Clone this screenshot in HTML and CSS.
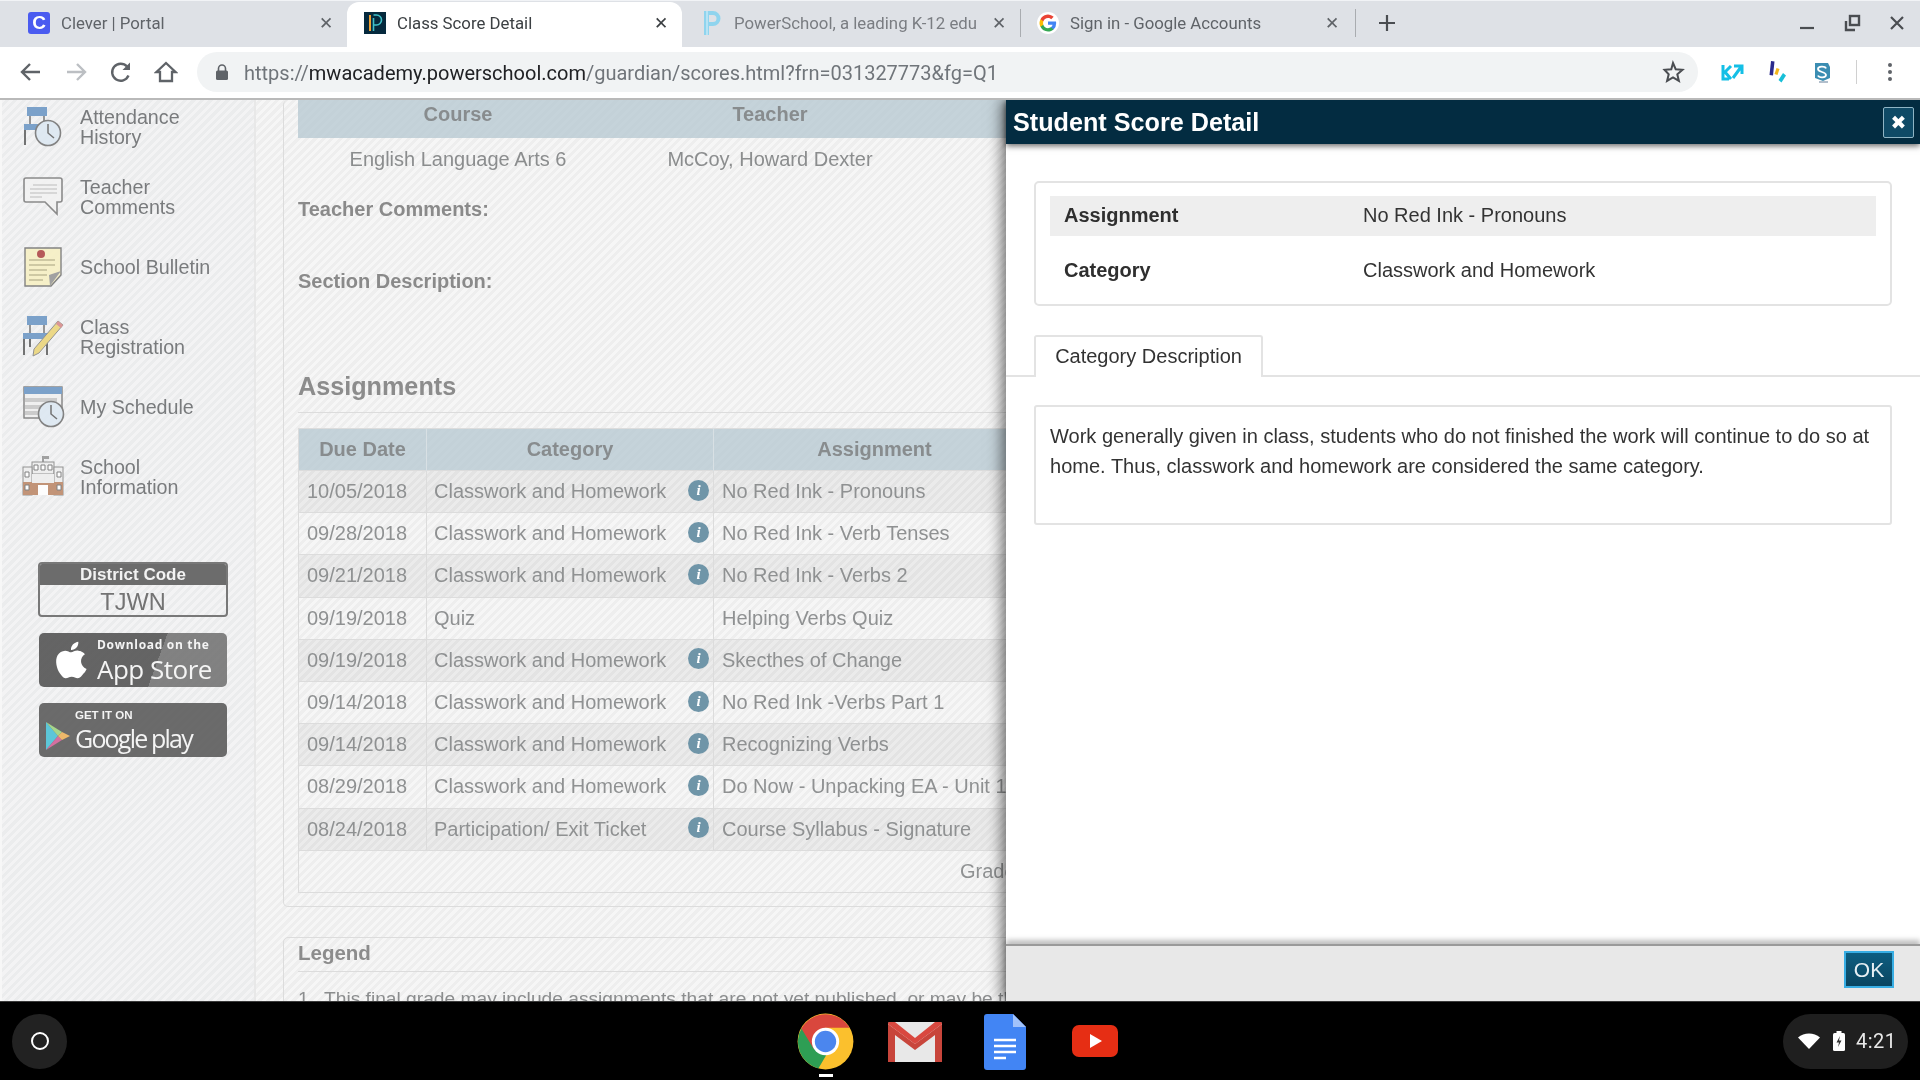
FILE: index.html
```html
<!DOCTYPE html>
<html lang="en">
<head>
<meta charset="utf-8">
<title>Class Score Detail</title>
<link rel="stylesheet" href="styles.css">
</head>
<body>
<div class="screen">
  <header class="tabstrip">
    <div class="tab tab-first">
      <span class="fav fav-clever">C</span><span class="tab-title">Clever | Portal</span><span class="tab-x">✕</span>
    </div>
    <div class="tab tab-active">
      <svg class="fav" viewBox="0 0 22 22"><rect width="22" height="22" fill="#05293d"/><path d="M6 3v16" stroke="#f0a030" stroke-width="2"/><path d="M9.500 3h3a5 5 0 0 1 0 10h-3" fill="none" stroke="#3fc0c8" stroke-width="1.600"/><path d="M9.500 6v13" stroke="#3fc0c8" stroke-width="1.600"/></svg>
      <span class="tab-title tab-title-dark">Class Score Detail</span><span class="tab-x tab-x-dark">✕</span>
    </div>
    <div class="tab tab-third">
      <svg class="fav fav-tall" viewBox="0 0 20 26"><path d="M3 1h9a7.500 7.500 0 0 1 0 15H8v9H3zM8 5v7h4a3.500 3.500 0 0 0 0-7z" fill="#8fd4ee"/><path d="M6 1v24" stroke="#c4e9f6" stroke-width="1.500"/></svg>
      <span class="tab-title tab-title-fade">PowerSchool, a leading K-12 edu</span><span class="tab-x">✕</span>
    </div>
    <i class="tab-sep"></i>
    <div class="tab tab-fourth">
      <svg class="fav" viewBox="0 0 24 24"><circle cx="12" cy="12" r="12" fill="#fff"/><path d="M20.900 12.200c0-.7-.1-1.300-.2-1.900H12v3.600h5a4.300 4.300 0 0 1-1.900 2.800v2.300h3a9 9 0 0 0 2.800-6.800z" fill="#4285f4"/><path d="M12 21.200c2.500 0 4.600-.8 6.100-2.200l-3-2.300c-.8.600-1.900.9-3.100.9-2.400 0-4.400-1.600-5.100-3.800H3.800v2.400A9.200 9.200 0 0 0 12 21.200z" fill="#34a853"/><path d="M6.900 13.800a5.500 5.500 0 0 1 0-3.600V7.800H3.800a9.200 9.200 0 0 0 0 8.400z" fill="#fbbc05"/><path d="M12 6.500c1.400 0 2.600.5 3.500 1.400l2.700-2.700A9.200 9.200 0 0 0 3.800 7.800l3.100 2.400C7.600 8.100 9.600 6.500 12 6.500z" fill="#ea4335"/></svg>
      <span class="tab-title">Sign in - Google Accounts</span><span class="tab-x">✕</span>
    </div>
    <i class="tab-sep"></i>
    <svg class="new-tab" viewBox="0 0 18 18"><path d="M9 1v16M1 9h16" stroke="#4a4d51" stroke-width="2.200"/></svg>
    <div class="win-controls">
      <svg viewBox="0 0 18 18"><path d="M2 14h14" stroke="#4a4d51" stroke-width="2.200"/></svg>
      <svg viewBox="0 0 18 18"><rect x="7" y="2" width="9" height="9" fill="none" stroke="#4a4d51" stroke-width="2.400"/><path d="M3 7v9h9" fill="none" stroke="#4a4d51" stroke-width="2.400"/></svg>
      <svg viewBox="0 0 18 18"><path d="M3 3l12 12M15 3L3 15" stroke="#4a4d51" stroke-width="2.200"/></svg>
    </div>
  </header>

  <div class="toolbar">
    <svg class="tool" viewBox="0 0 24 24"><path d="M21 12H4M11 4l-8 8 8 8" fill="none" stroke="#5f6368" stroke-width="2.400"/></svg>
    <svg class="tool" viewBox="0 0 24 24"><path d="M3 12h17M13 4l8 8-8 8" fill="none" stroke="#bcbfc3" stroke-width="2.400"/></svg>
    <svg class="tool" viewBox="0 0 24 24"><path d="M19.500 15.500A8.500 8.500 0 1 1 18 6.500" fill="none" stroke="#5f6368" stroke-width="2.400"/><path d="M21 2.500V10h-7.500z" fill="#5f6368"/></svg>
    <svg class="tool" viewBox="0 0 24 24"><path d="M12 3l9.500 9H18v9H6v-9H2.500z" fill="none" stroke="#5f6368" stroke-width="2.300"/></svg>
    <div class="omnibox">
      <svg class="lock" viewBox="0 0 14 18"><path d="M3.500 8V5.500a3.500 3.500 0 0 1 7 0V8" fill="none" stroke="#5f6368" stroke-width="1.600"/><rect x="1" y="7.500" width="12" height="9.500" rx="1.500" fill="#5f6368"/></svg>
      <span class="url"><span class="url-dim">https://</span>mwacademy.powerschool.com<span class="url-dim">/guardian/scores.html?frn=031327773&amp;fg=Q1</span></span>
      <svg class="star" viewBox="0 0 24 24"><path d="M12 3l2.700 6.200 6.800.6-5.200 4.500 1.600 6.600-5.900-3.500-5.900 3.500 1.600-6.600L3.500 9.800l6.800-.6z" fill="none" stroke="#4a4d51" stroke-width="2"/></svg>
    </div>
    <div class="ext-row">
      <svg viewBox="0 0 24 24"><path d="M3 5v14h6M11 6L4 13M11 19L5 12" fill="none" stroke="#14bfe6" stroke-width="3"/><path d="M13 18L21 7M14 6h8v8" fill="none" stroke="#14bfe6" stroke-width="3"/></svg>
      <svg viewBox="0 0 24 24"><path d="M6 1l3.500.5-1.500 14-3.500-.5z" fill="#2a2a8c"/><path d="M11.500 8l3 1-2 6-3-1z" fill="#f2b61c"/><path d="M18 13l3 2.500-4.500 7L13.500 20z" fill="#17bfd8"/></svg>
      <svg viewBox="0 0 24 24"><path d="M5 3h13l2 4v11l-7 3-8-3z" fill="#3b8db2"/><path d="M16 8.500C15 6 8 6 8 9c0 3.500 8 2.500 8 6 0 3-7 3-8 .5" fill="none" stroke="#fff" stroke-width="1.800"/><path d="M9 22h9" stroke="#9ab" stroke-width="1.500"/></svg>
      <i class="ext-sep"></i>
      <svg class="menu" viewBox="0 0 24 24"><circle cx="12" cy="5" r="2" fill="#5f6368"/><circle cx="12" cy="12" r="2" fill="#5f6368"/><circle cx="12" cy="19" r="2" fill="#5f6368"/></svg>
    </div>
  </div>

  <div class="viewport">
    <aside class="sidebar">
      <nav class="nav">
        <a class="nav-item">
          <svg class="nav-icon" viewBox="0 0 44 44"><rect x="6" y="2" width="20" height="9" fill="#6f99c6"/><path d="M9 11v8M23 11v8" stroke="#6a6a6a" stroke-width="1.500"/><rect x="3" y="19" width="14" height="6" fill="#6f99c6"/><path d="M4 25v15" stroke="#666" stroke-width="2"/><circle cx="27" cy="28" r="12.500" fill="#dde8f2" stroke="#777" stroke-width="1.600"/><path d="M27 19v9l6 5" fill="none" stroke="#666" stroke-width="1.500"/></svg>
          <span>Attendance<br>History</span>
        </a>
        <a class="nav-item">
          <svg class="nav-icon" viewBox="0 0 44 44"><path d="M5 3h34a2 2 0 0 1 2 2v20a2 2 0 0 1-2 2h-3v12L24 27H5a2 2 0 0 1-2-2V5a2 2 0 0 1 2-2z" fill="#f2f2f2" stroke="#808080" stroke-width="1.600"/><path d="M12 10h24M9 14h27M9 18h27M9 22h12" stroke="#b5b5b5" stroke-width="1.200"/></svg>
          <span>Teacher<br>Comments</span>
        </a>
        <a class="nav-item">
          <svg class="nav-icon" viewBox="0 0 44 44"><path d="M4 3h36v27L30 41H4z" fill="#f7f0c4" stroke="#777" stroke-width="1.400"/><path d="M40 26L28 30l1 11z" fill="#999"/><circle cx="20" cy="9" r="4" fill="#b04a4a"/><path d="M8 15h26M8 20h26M8 25h18M8 30h18M8 35h14" stroke="#bdb68e" stroke-width="1.300"/></svg>
          <span>School Bulletin</span>
        </a>
        <a class="nav-item">
          <svg class="nav-icon" viewBox="0 0 44 44"><rect x="6" y="1" width="20" height="9" fill="#6f99c6"/><path d="M9 10v8M23 10v8" stroke="#6a6a6a" stroke-width="1.500"/><rect x="2" y="18" width="28" height="6" fill="#6f99c6"/><path d="M3 24v16M26 24v16M9 24v8" stroke="#666" stroke-width="2"/><path d="M37 6l5 4-24 28-6 3 1-7z" fill="#ecd67c" stroke="#888" stroke-width="1"/><path d="M37 6l5 4-2 3-5-4z" fill="#d98d8d"/></svg>
          <span>Class<br>Registration</span>
        </a>
        <a class="nav-item">
          <svg class="nav-icon" viewBox="0 0 44 44"><rect x="3" y="2" width="38" height="31" fill="#f0f0f0" stroke="#777" stroke-width="1.400"/><rect x="3" y="2" width="38" height="7" fill="#6f99c6"/><path d="M4 15h32M4 22h28M4 28h24" stroke="#c8c8c8" stroke-width="4"/><circle cx="30" cy="29" r="12.500" fill="#dde8f2" stroke="#777" stroke-width="1.600"/><path d="M30 20v9l6 5" fill="none" stroke="#666" stroke-width="1.500"/></svg>
          <span>My Schedule</span>
        </a>
        <a class="nav-item">
          <svg class="nav-icon" viewBox="0 0 44 44"><path d="M22 1v6" stroke="#777" stroke-width="1.500"/><rect x="22" y="1" width="6" height="3" fill="#999"/><rect x="11" y="7" width="22" height="12" fill="#eee" stroke="#888"/><rect x="2" y="12" width="9" height="28" fill="#eee" stroke="#888"/><rect x="33" y="12" width="9" height="28" fill="#eee" stroke="#888"/><rect x="2" y="27" width="40" height="13" fill="#bd8a6b"/><rect x="11" y="19" width="22" height="9" fill="#eee"/><path d="M13 10h4v5h-4zM20 10h4v5h-4zM27 10h4v5h-4zM4 17h4v5H4zM36 17h4v5h-4zM4 30h4v5H4zM36 30h4v5h-4z" fill="#fff" stroke="#777"/><rect x="17" y="30" width="10" height="10" fill="#fff"/></svg>
          <span>School<br>Information</span>
        </a>
      </nav>
      <div class="district">
        <div class="district-head">District Code</div>
        <div class="district-code">TJWN</div>
      </div>
      <div class="badge badge-apple">
        <svg class="apple" viewBox="0 0 24 24"><path d="M18.700 19.500c-.8 1.200-1.700 2.400-3 2.400-1.300 0-1.800-.8-3.300-.8-1.500 0-2 .8-3.300.8-1.300.1-2.300-1.300-3.100-2.500C4.300 17 3 12.400 4.700 9.400c.9-1.500 2.400-2.400 4.100-2.500 1.300 0 2.500.9 3.300.9.800 0 2.300-1.100 3.800-.9.700 0 2.500.3 3.700 2-3.200 1.900-2.700 6.600.9 8-.4.900-.9 1.800-1.800 2.600zM15 5.200c.7-.8 1.100-2 1-3.200-1 .1-2.200.7-3 1.500-.6.800-1.200 1.900-1 3.100 1.100.1 2.300-.6 3-1.400z" fill="#fff"/></svg>
        <div class="badge-text">
          <span class="badge-small">Download on the</span>
          <span class="badge-large">App Store</span>
        </div>
      </div>
      <div class="badge badge-play">
        <svg class="play" viewBox="0 0 26 30"><path d="M1 1l12 14L1 29z" fill="#5cc6d8"/><path d="M1 1l16 10-4 4z" fill="#a6d68a"/><path d="M1 29l16-10-4-4z" fill="#d46fa0"/><path d="M17 11l8 4-8 4-4-4z" fill="#eeb86a"/></svg>
        <div class="badge-text badge-text-play">
          <span class="badge-get">GET IT ON</span>
          <span class="badge-google">Google play</span>
        </div>
      </div>
    </aside>

    <main class="content">
      <section class="card card-main">
        <div class="course-head"><span>Course</span><span>Teacher</span></div>
        <div class="course-row"><span>English Language Arts 6</span><span>McCoy, Howard Dexter</span></div>
        <div class="label label-comments">Teacher Comments:</div>
        <div class="label label-section">Section Description:</div>
        <h2 class="heading heading-assign">Assignments</h2>
        <table class="scores">
          <colgroup><col class="col-date"><col class="col-cat"><col class="col-name"><col></colgroup>
          <thead><tr><th>Due Date</th><th>Category</th><th>Assignment</th><th></th></tr></thead>
          <tbody>
            <tr><td>10/05/2018</td><td><div class="cat">Classwork and Homework<b class="info">i</b></div></td><td>No Red Ink - Pronouns</td><td></td></tr>
            <tr><td>09/28/2018</td><td><div class="cat">Classwork and Homework<b class="info">i</b></div></td><td>No Red Ink - Verb Tenses</td><td></td></tr>
            <tr><td>09/21/2018</td><td><div class="cat">Classwork and Homework<b class="info">i</b></div></td><td>No Red Ink - Verbs 2</td><td></td></tr>
            <tr><td>09/19/2018</td><td><div class="cat">Quiz</div></td><td>Helping Verbs Quiz</td><td></td></tr>
            <tr><td>09/19/2018</td><td><div class="cat">Classwork and Homework<b class="info">i</b></div></td><td>Skecthes of Change</td><td></td></tr>
            <tr><td>09/14/2018</td><td><div class="cat">Classwork and Homework<b class="info">i</b></div></td><td>No Red Ink -Verbs Part 1</td><td></td></tr>
            <tr><td>09/14/2018</td><td><div class="cat">Classwork and Homework<b class="info">i</b></div></td><td>Recognizing Verbs</td><td></td></tr>
            <tr><td>08/29/2018</td><td><div class="cat">Classwork and Homework<b class="info">i</b></div></td><td>Do Now - Unpacking EA - Unit 1</td><td></td></tr>
            <tr><td>08/24/2018</td><td><div class="cat">Participation/ Exit Ticket<b class="info">i</b></div></td><td>Course Syllabus - Signature</td><td></td></tr>
            <tr class="row-foot"><td colspan="4">Grades last updated on 10/05/2018</td></tr>
          </tbody>
        </table>
      </section>
      <section class="card card-legend">
        <h2 class="heading heading-legend">Legend</h2>
        <p class="legend-text"><span class="legend-num">1.</span>This final grade may include assignments that are not yet published, or may be the result</p>
      </section>
    </main>

    <div class="modal">
      <div class="modal-head">
        <span class="modal-title">Student Score Detail</span>
        <button class="modal-close">✖</button>
      </div>
      <div class="modal-body">
        <div class="detail">
          <div class="detail-row detail-row-shade"><b>Assignment</b><span>No Red Ink - Pronouns</span></div>
          <div class="detail-row"><b>Category</b><span>Classwork and Homework</span></div>
        </div>
        <div class="modal-tabs"><div class="modal-tab">Category Description</div></div>
        <div class="desc">Work generally given in class, students who do not finished the work will continue to do so at home. Thus, classwork and homework are considered the same category.</div>
      </div>
      <div class="modal-foot"><button class="ok">OK</button></div>
    </div>
  </div>

  <footer class="shelf">
    <div class="launcher"><i></i></div>
    <div class="apps">
      <div class="app app-chrome">
        <svg class="chrome" viewBox="0 0 48 48"><circle cx="24" cy="24" r="23.500" fill="#fbc02d"/><path d="M4.100 12.500A23 23 0 0 0 18 46.700L29 28H19z" fill="#2e9e54"/><path d="M3.700 13A23.500 23.500 0 0 1 44.300 12.500H24L14 30z" fill="#d9473d"/><circle cx="24" cy="24" r="11.500" fill="#fff"/><circle cx="24" cy="24" r="9" fill="#4b86ee"/></svg>
        <i class="app-dot"></i>
      </div>
      <svg class="gmail" viewBox="0 0 56 42"><rect x="1" y="1" width="54" height="40" rx="2" fill="#e8e8e8"/><path d="M1 41V3l27 20L55 3v38h-7V14L28 29 8 14v27z" fill="#c8453b"/><path d="M2 1h6l20 16L48 1h6a2 2 0 0 1 1 2L28 23 1 3a2 2 0 0 1 1-2z" fill="#d9483f"/></svg>
      <svg class="docs" viewBox="0 0 42 56"><path d="M3 0h26l13 13v40a3 3 0 0 1-3 3H3a3 3 0 0 1-3-3V3a3 3 0 0 1 3-3z" fill="#4285f4"/><path d="M29 0l13 13H29z" fill="#a1c2fa"/><path d="M10 26h22M10 32h22M10 38h22M10 44h12" stroke="#fff" stroke-width="2.400"/></svg>
      <svg class="yt" viewBox="0 0 46 32"><rect width="46" height="32" rx="7" fill="#e62e14"/><path d="M18 9l12 7-12 7z" fill="#fff"/></svg>
    </div>
    <div class="status">
      <svg class="wifi" viewBox="0 0 22 16"><path d="M0 4.500C6-1 16-1 22 4.500L11 16z" fill="#fff"/></svg>
      <svg class="batt" viewBox="0 0 12 20"><rect x="3.500" y="0" width="5" height="2.500" fill="#fff"/><rect y="2" width="12" height="18" rx="1.500" fill="#fff"/><path d="M7 5L3.500 11.500H6L5 16l3.500-6.500H6z" fill="#333"/></svg>
      <span class="clock">4:21</span>
    </div>
  </footer>
</div>
</body>
</html>
```

FILE: styles.css
```css
* { box-sizing: border-box; }
html, body { margin: 0; padding: 0; height: 100%; overflow: hidden; }
body { font-family: "Liberation Sans", Arial, sans-serif; background: #000; }
.screen { width: 1920px; height: 1080px; display: flex; flex-direction: column; overflow: hidden; filter: blur(0.35px); }

/* tab strip */
.tabstrip { height: 47px; background: #dee1e6; border-top: 1px solid #f1f3f6; display: flex; align-items: stretch; flex: none; }
.tab { display: flex; align-items: center; padding-bottom: 3px; font: 16.8px Roboto, sans-serif; color: #5f6368; white-space: nowrap; }
.tab-first { width: 347px; padding: 0 13px 3px 28px; }
.tab-active { width: 335px; padding: 0 13px 3px 17px; background: #fff; border-radius: 12px 12px 0 0; margin-top: 1px; }
.tab-third { width: 336px; margin-left: 2px; padding: 0 13px 3px 17px; }
.tab-fourth { width: 334px; padding: 0 15px 3px 16px; }
.fav { width: 22px; height: 22px; flex: none; margin-right: 11px; }
.fav-tall { height: 26px; width: 20px; margin-right: 13px; }
.fav-clever { background: #4a5bf0; color: #fff; border-radius: 3px; font: bold 19px/22px "Liberation Sans", sans-serif; text-align: center; }
.tab-title { flex: 1; overflow: hidden; }
.tab-title-dark { color: #3c4043; }
.tab-title-fade { color: #7a7d82; }
.tab-x { width: 16px; text-align: center; font: 17px "DejaVu Sans", sans-serif; color: #5f6368; flex: none; margin-left: 8px; }
.tab-x-dark { color: #3c4043; }
.tab-sep { width: 1px; height: 28px; background: #a9acb0; align-self: center; flex: none; margin-bottom: 3px; }
.new-tab { width: 18px; height: 18px; align-self: center; margin: 0 0 3px 22px; flex: none; }
.win-controls { margin-left: auto; display: flex; align-items: center; gap: 27px; padding: 0 14px 3px 0; }
.win-controls svg { width: 18px; height: 18px; }

/* toolbar */
.toolbar { height: 53px; flex: none; background: #fff; border-bottom: 2px solid #b9b9b9; display: flex; align-items: center; padding: 0 0 1px 19px; }
.tool { width: 24px; height: 24px; margin-right: 21px; flex: none; }
.omnibox { width: 1501px; height: 40px; margin-left: -2px; border-radius: 20px; background: #f1f3f4; display: flex; align-items: center; padding: 0 13px 0 18px; flex: none; }
.lock { width: 14px; height: 18px; flex: none; margin-right: 15px; }
.url { font: 20px Roboto, sans-serif; padding-top: 2px; color: #202124; flex: 1; white-space: nowrap; }
.url-dim { color: #70757a; }
.star { width: 24px; height: 24px; flex: none; }
.ext-row { display: flex; align-items: center; gap: 21px; margin-left: 22px; }
.ext-row svg { width: 24px; height: 24px; flex: none; }
.ext-sep { width: 1px; height: 24px; margin-left: 1px; background: #d0d0d0; }
.ext-row .menu { margin-left: 0; }

/* page */
.viewport { position: relative; flex: 1; min-height: 0; display: flex; overflow: hidden; background: repeating-linear-gradient(-45deg, #f6f6f6 0 3px, #eeeeee 3px 6px); }
.sidebar { width: 256px; flex: none; border-right: 2px solid #e8e8e8; border-left: 2px solid #f7f7f7; background: repeating-linear-gradient(-45deg, #ebeced 0 3px, #f3f3f4 3px 6px); display: flex; flex-direction: column; align-items: flex-start; }
.nav { margin-top: -8px; margin-bottom: 50px; }
.nav-item { height: 70px; display: flex; align-items: center; gap: 15px; padding-left: 19px; font-size: 19.7px; line-height: 20px; color: #797b7d; }
.nav-icon { width: 44px; height: 44px; flex: none; opacity: .9; }
.district { width: 190px; height: 55px; margin-left: 36px; border: 2px solid #787878; border-radius: 4px; overflow: hidden; }
.district-head { height: 21px; background: #6c6c6c; color: #f2f2f2; font: bold 17px/21px "Liberation Sans", sans-serif; text-align: center; }
.district-code { color: #737373; font-size: 23.5px; line-height: 34px; text-align: center; }
.badge { width: 188px; height: 54px; margin-left: 37px; border-radius: 5px; background: rgba(88, 88, 88, .88); color: #f4f4f4; display: flex; align-items: center; }
.badge-apple { margin-top: 16px; padding-left: 10px; gap: 4px; background: linear-gradient(110deg, rgba(85, 85, 85, .9) 0 62%, rgba(110, 110, 110, .85) 62% 100%); }
.badge-play { margin-top: 16px; padding-left: 6px; gap: 0; }
.apple { width: 44px; height: 48px; flex: none; }
.play { width: 26px; height: 30px; flex: none; margin-top: 12px; }
.badge-text { display: flex; flex-direction: column; }
.badge-text-play { margin-left: 4px; }
.badge-small { font: bold 12px/17px "Open Sans", sans-serif; letter-spacing: .7px; }
.badge-large { font: 26px/32px "Open Sans", sans-serif; letter-spacing: -.5px; }
.badge-get { font: bold 11.5px/15px "Liberation Sans", sans-serif; }
.badge-google { font: 25px/30px "Open Sans", sans-serif; letter-spacing: -1.800px; }

.content { flex: 1; min-width: 0; padding-left: 27px; overflow: hidden; color: #8b8d8e; font-size: 20px; }
.card { width: 1000px; padding: 0 14px; border: 1px solid #dcdcdc; border-radius: 5px; }
.card-main { border-top: 0; height: 807px; }
.card-legend { margin-top: 30px; height: 90px; }
.course-head { height: 38px; width: 986px; padding-bottom: 10px; background: rgba(176, 196, 206, .7); font-weight: bold; color: #888c8e; display: flex; }
.course-row { height: 42px; display: flex; }
.course-head span, .course-row span { width: 312px; display: flex; align-items: center; justify-content: center; }
.course-head span:first-child, .course-row span:first-child { width: 320px; }
.course-head span:last-child, .course-row span:last-child { margin-left: -4px; }
.label { font-weight: bold; line-height: 22px; height: 22px; color: #8a8a8a; }
.label-comments { margin-top: 18px; }
.label-section { margin-top: 50px; }
.heading { margin: 0; font-weight: bold; color: #8c8c8c; border-bottom: 1px solid #dcdcdc; }
.heading-assign { margin-top: 78px; font-size: 25.2px; line-height: 32px; padding-bottom: 10px; }
.heading-legend { font-size: 20.5px; line-height: 30px; padding: 0 0 3px; }
.scores { margin-top: 15px; width: 986px; table-layout: fixed; border-collapse: collapse; border: 1px solid #dcdcdc; }
.col-date { width: 128px; }
.col-cat { width: 287px; }
.col-name { width: 322px; }
.scores th { height: 42px; background: rgba(176, 196, 206, .7); color: #888c8e; border-right: 1px solid #d8e0e4; padding: 0; }
.scores td { height: 42.2px; padding: 0 8px; border: 1px solid #dcdcdc; white-space: nowrap; overflow: hidden; color: #8f9192; }
.scores tbody tr:nth-child(odd) td { background: rgba(0, 0, 0, .045); }
.scores .row-foot td { height: 42px; padding-left: 661px; background: none; }
.cat { display: flex; align-items: center; justify-content: space-between; margin: 0 -4px 0 -1px; }
.info { width: 21px; height: 21px; margin-bottom: 3px; border-radius: 50%; background: #6f95a8; color: #fff; font: italic bold 15px/21px "Liberation Serif", serif; text-align: center; flex: none; }
.legend-text { margin: 16px 0 0; white-space: nowrap; font-size: 19.2px; }
.legend-num { display: inline-block; width: 26px; }

/* modal */
.modal { position: absolute; top: 0; right: 0; bottom: 0; left: 1006px; background: #fff; display: flex; flex-direction: column; box-shadow: -4px 0 14px rgba(0, 0, 0, .55); color: #333; font-size: 20px; }
.modal-head { height: 44px; flex: none; background: #032c41; color: #fff; display: flex; align-items: center; justify-content: space-between; padding: 0 6px 0 7px; box-shadow: 0 2px 6px rgba(0, 0, 0, .6); position: relative; }
.modal-title { font-size: 25.2px; font-weight: bold; }
.modal-close { width: 31px; height: 31px; padding: 0; background: #0f4a66; border: 1px solid #8fb4c4; border-radius: 2px; color: #fff; font: 19px/1 "DejaVu Sans", sans-serif; }
.modal-body { flex: 1; min-height: 0; }
.detail { margin: 37px 28px 0 28px; height: 125px; padding: 13px 14px; border: 2px solid #e3e3e3; border-radius: 5px; display: flex; flex-direction: column; gap: 15px; }
.detail-row { height: 40px; display: flex; align-items: center; padding: 0 0 1px 14px; color: #333; flex: none; }
.detail-row b { width: 299px; color: #2f2f2f; }
.detail-row-shade { background: #eee; }
.modal-tabs { margin-top: 29px; padding-left: 28px; height: 42px; border-bottom: 2px solid #e3e3e3; }
.modal-tab { width: 229px; height: 42px; border: 2px solid #e3e3e3; border-bottom: 0; border-radius: 3px 3px 0 0; background: #fff; text-align: center; line-height: 39px; }
.desc { margin: 28px 28px 0 28px; height: 120px; padding: 14px 12px 14px 14px; border: 2px solid #e3e3e3; border-radius: 3px; font-size: 20.05px; line-height: 30px; }
.modal-foot { height: 57px; flex: none; background: #e8e8e8; border-top: 2px solid #9a9a9a; box-shadow: 0 -4px 5px rgba(0, 0, 0, .25); display: flex; justify-content: flex-end; align-items: flex-start; padding: 5px 26px 0 0; position: relative; }
.ok { width: 50px; height: 37px; padding: 0; background: linear-gradient(#0d5d80, #0a4661); border: 2px solid #38aee4; color: #e6eff3; font: 21px "Liberation Sans", sans-serif; }

/* shelf */
.shelf { height: 79px; flex: none; background: #000; border-top: 1px solid #3a3a3a; position: relative; display: flex; align-items: center; justify-content: space-between; padding: 0 12px; }
.launcher { width: 55px; height: 55px; border-radius: 50%; background: #222; display: flex; align-items: center; justify-content: center; }
.launcher i { width: 18px; height: 18px; border: 2px solid #fff; border-radius: 50%; }
.apps { position: absolute; left: 797px; top: 0; height: 78px; display: flex; align-items: flex-start; }
.app { position: relative; width: 57px; }
.chrome { width: 57px; height: 57px; display: block; margin-top: 11px; }
.app-dot { display: block; width: 14px; height: 3px; background: #fff; margin: 4px auto 0; }
.gmail { width: 56px; height: 42px; margin: 19px 0 0 33px; }
.docs { width: 42px; height: 56px; margin: 12px 0 0 41px; }
.yt { width: 46px; height: 32px; margin: 23px 0 0 46px; }
.status { width: 125px; height: 55px; border-radius: 28px; background: #1f1f1f; display: flex; align-items: center; padding-left: 15px; color: #fff; }
.wifi { width: 22px; height: 16px; flex: none; }
.batt { width: 12px; height: 20px; flex: none; margin-left: 13px; }
.clock { font: 20px Roboto, sans-serif; margin-left: 11px; letter-spacing: .5px; color: #e8e8e8; }
```
